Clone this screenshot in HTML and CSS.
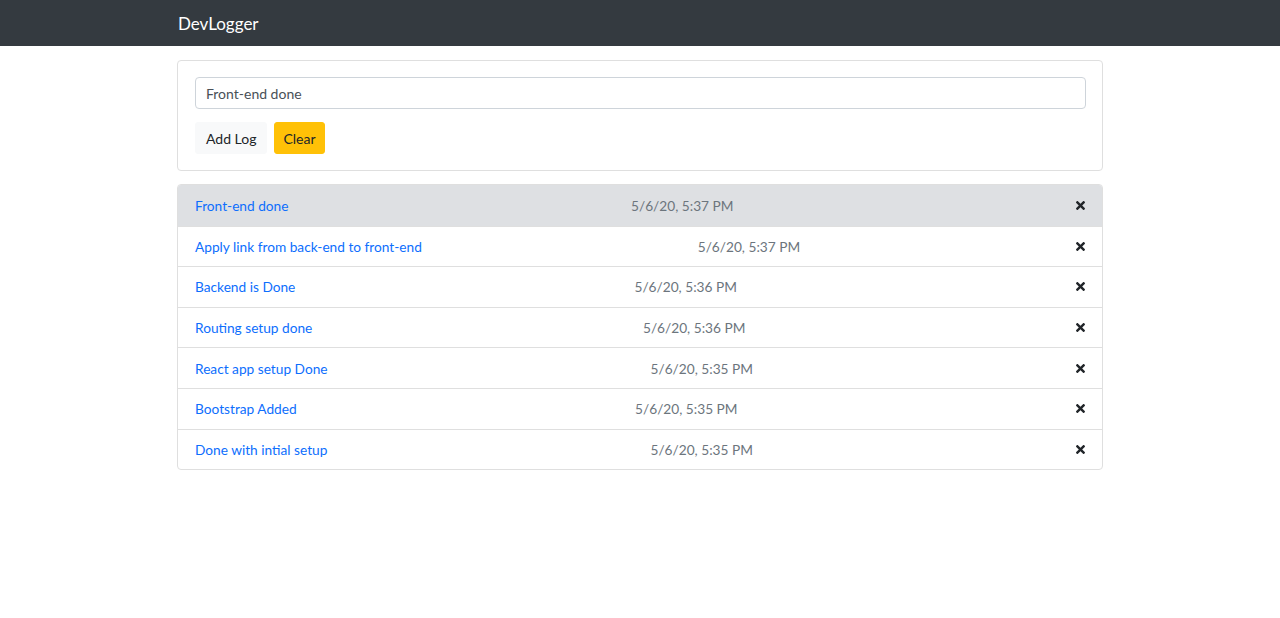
FILE: index.html
```html
<!DOCTYPE html>
<html lang="en">
<head>
<meta charset="utf-8">
<title>DevLogger</title>
<link rel="stylesheet" href="styles.css">
</head>
<body>
<nav class="navbar">
  <div class="container">
    <span class="brand">DevLogger</span>
  </div>
</nav>
<main class="container">
  <div class="card">
    <input class="input" type="text" value="Front-end done">
    <div class="actions">
      <button class="btn btn-light">Add Log</button>
      <button class="btn btn-warning">Clear</button>
    </div>
  </div>
  <ul class="list">
    <li class="item active"><a class="title">Front-end done</a><span class="date">5/6/20, 5:37 PM</span><svg class="del" viewBox="0 0 352 512" width="9" height="13"><path d="M242.72 256l100.07-100.07c12.28-12.28 12.28-32.19 0-44.48l-22.24-22.24c-12.28-12.28-32.19-12.28-44.48 0L176 189.28 75.93 89.21c-12.28-12.28-32.19-12.28-44.48 0L9.21 111.45c-12.28 12.28-12.28 32.19 0 44.48L109.28 256 9.21 356.07c-12.28 12.28-12.28 32.19 0 44.48l22.24 22.24c12.28 12.28 32.2 12.28 44.48 0L176 322.72l100.07 100.07c12.28 12.28 32.2 12.28 44.48 0l22.24-22.24c12.28-12.28 12.28-32.19 0-44.48L242.72 256z"/></svg></li>
    <li class="item"><a class="title">Apply link from back-end to front-end</a><span class="date">5/6/20, 5:37 PM</span><svg class="del" viewBox="0 0 352 512" width="9" height="13"><path d="M242.72 256l100.07-100.07c12.28-12.28 12.28-32.19 0-44.48l-22.24-22.24c-12.28-12.28-32.19-12.28-44.48 0L176 189.28 75.93 89.21c-12.28-12.28-32.19-12.28-44.48 0L9.21 111.45c-12.28 12.28-12.28 32.19 0 44.48L109.28 256 9.21 356.07c-12.28 12.28-12.28 32.19 0 44.48l22.24 22.24c12.28 12.28 32.2 12.28 44.48 0L176 322.72l100.07 100.07c12.28 12.28 32.2 12.28 44.48 0l22.24-22.24c12.28-12.28 12.28-32.19 0-44.48L242.72 256z"/></svg></li>
    <li class="item"><a class="title">Backend is Done</a><span class="date">5/6/20, 5:36 PM</span><svg class="del" viewBox="0 0 352 512" width="9" height="13"><path d="M242.72 256l100.07-100.07c12.28-12.28 12.28-32.19 0-44.48l-22.24-22.24c-12.28-12.28-32.19-12.28-44.48 0L176 189.28 75.93 89.21c-12.28-12.28-32.19-12.28-44.48 0L9.21 111.45c-12.28 12.28-12.28 32.19 0 44.48L109.28 256 9.21 356.07c-12.28 12.28-12.28 32.19 0 44.48l22.24 22.24c12.28 12.28 32.2 12.28 44.48 0L176 322.72l100.07 100.07c12.28 12.28 32.2 12.28 44.48 0l22.24-22.24c12.28-12.28 12.28-32.19 0-44.48L242.72 256z"/></svg></li>
    <li class="item"><a class="title">Routing setup done</a><span class="date">5/6/20, 5:36 PM</span><svg class="del" viewBox="0 0 352 512" width="9" height="13"><path d="M242.72 256l100.07-100.07c12.28-12.28 12.28-32.19 0-44.48l-22.24-22.24c-12.28-12.28-32.19-12.28-44.48 0L176 189.28 75.93 89.21c-12.28-12.28-32.19-12.28-44.48 0L9.21 111.45c-12.28 12.28-12.28 32.19 0 44.48L109.28 256 9.21 356.07c-12.28 12.28-12.28 32.19 0 44.48l22.24 22.24c12.28 12.28 32.2 12.28 44.48 0L176 322.72l100.07 100.07c12.28 12.28 32.2 12.28 44.48 0l22.24-22.24c12.28-12.28 12.28-32.19 0-44.48L242.72 256z"/></svg></li>
    <li class="item"><a class="title">React app setup Done</a><span class="date">5/6/20, 5:35 PM</span><svg class="del" viewBox="0 0 352 512" width="9" height="13"><path d="M242.72 256l100.07-100.07c12.28-12.28 12.28-32.19 0-44.48l-22.24-22.24c-12.28-12.28-32.19-12.28-44.48 0L176 189.28 75.93 89.21c-12.28-12.28-32.19-12.28-44.48 0L9.21 111.45c-12.28 12.28-12.28 32.19 0 44.48L109.28 256 9.21 356.07c-12.28 12.28-12.28 32.19 0 44.48l22.24 22.24c12.28 12.28 32.2 12.28 44.48 0L176 322.72l100.07 100.07c12.28 12.28 32.2 12.28 44.48 0l22.24-22.24c12.28-12.28 12.28-32.19 0-44.48L242.72 256z"/></svg></li>
    <li class="item"><a class="title">Bootstrap Added</a><span class="date">5/6/20, 5:35 PM</span><svg class="del" viewBox="0 0 352 512" width="9" height="13"><path d="M242.72 256l100.07-100.07c12.28-12.28 12.28-32.19 0-44.48l-22.24-22.24c-12.28-12.28-32.19-12.28-44.48 0L176 189.28 75.93 89.21c-12.28-12.28-32.19-12.28-44.48 0L9.21 111.45c-12.28 12.28-12.28 32.19 0 44.48L109.28 256 9.21 356.07c-12.28 12.28-12.28 32.19 0 44.48l22.24 22.24c12.28 12.28 32.2 12.28 44.48 0L176 322.72l100.07 100.07c12.28 12.28 32.2 12.28 44.48 0l22.24-22.24c12.28-12.28 12.28-32.19 0-44.48L242.72 256z"/></svg></li>
    <li class="item"><a class="title">Done with intial setup</a><span class="date">5/6/20, 5:35 PM</span><svg class="del" viewBox="0 0 352 512" width="9" height="13"><path d="M242.72 256l100.07-100.07c12.28-12.28 12.28-32.19 0-44.48l-22.24-22.24c-12.28-12.28-32.19-12.28-44.48 0L176 189.28 75.93 89.21c-12.28-12.28-32.19-12.28-44.48 0L9.21 111.45c-12.28 12.28-12.28 32.19 0 44.48L109.28 256 9.21 356.07c-12.28 12.28-12.28 32.19 0 44.48l22.24 22.24c12.28 12.28 32.2 12.28 44.48 0L176 322.72l100.07 100.07c12.28 12.28 32.2 12.28 44.48 0l22.24-22.24c12.28-12.28 12.28-32.19 0-44.48L242.72 256z"/></svg></li>
  </ul>
</main>
</body>
</html>
```
FILE: styles.css
```css
* { box-sizing: border-box; }
body {
  margin: 0;
  font-family: Lato, "Open Sans", sans-serif;
  font-size: 14px;
  color: #212529;
  background: #fff;
}
.container {
  width: 926px;
  margin: 0 auto;
}
.navbar {
  background: #343a40;
  height: 46px;
  display: flex;
  align-items: center;
}
.brand {
  color: #fff;
  font-size: 17px;
  padding-left: 1px;
}
main.container { padding-top: 14px; }
.card {
  border: 1px solid #dfdfdf;
  border-radius: 4px;
  padding: 16px 16px 16px 17px;
}
.input {
  display: block;
  width: 100%;
  height: 32px;
  border: 1px solid #ced4da;
  border-radius: 4px;
  padding: 0 10px;
  font: inherit;
  font-size: 14px;
  color: #495057;
}
.actions {
  display: flex;
  gap: 7px;
  margin-top: 13px;
}
.btn {
  height: 32px;
  border: 1px solid transparent;
  border-radius: 3px;
  padding: 0 10px;
  font: inherit;
  font-size: 14px;
  color: #212529;
}
.btn-light { background: #f8f9fa; border-color: #f8f9fa; }
.btn-warning { background: #ffc107; border-color: #ffc107; padding: 0 8px; }
.list {
  list-style: none;
  margin: 13px 0 0;
  padding: 0;
  border: 1px solid #dfdfdf;
  border-radius: 4px;
  overflow: hidden;
}
.item {
  display: flex;
  justify-content: space-between;
  align-items: center;
  height: 40.6px;
  padding: 0 17px 0 17px;
  border-top: 1px solid #dfdfdf;
  font-size: 13.7px;
}
.item:first-child { border-top: 0; }
.item.active { background: #dee0e3; }
.title { color: #0d6efd; }
.date { color: #6c757d; }
.del { fill: #212529; display: block; }
```
